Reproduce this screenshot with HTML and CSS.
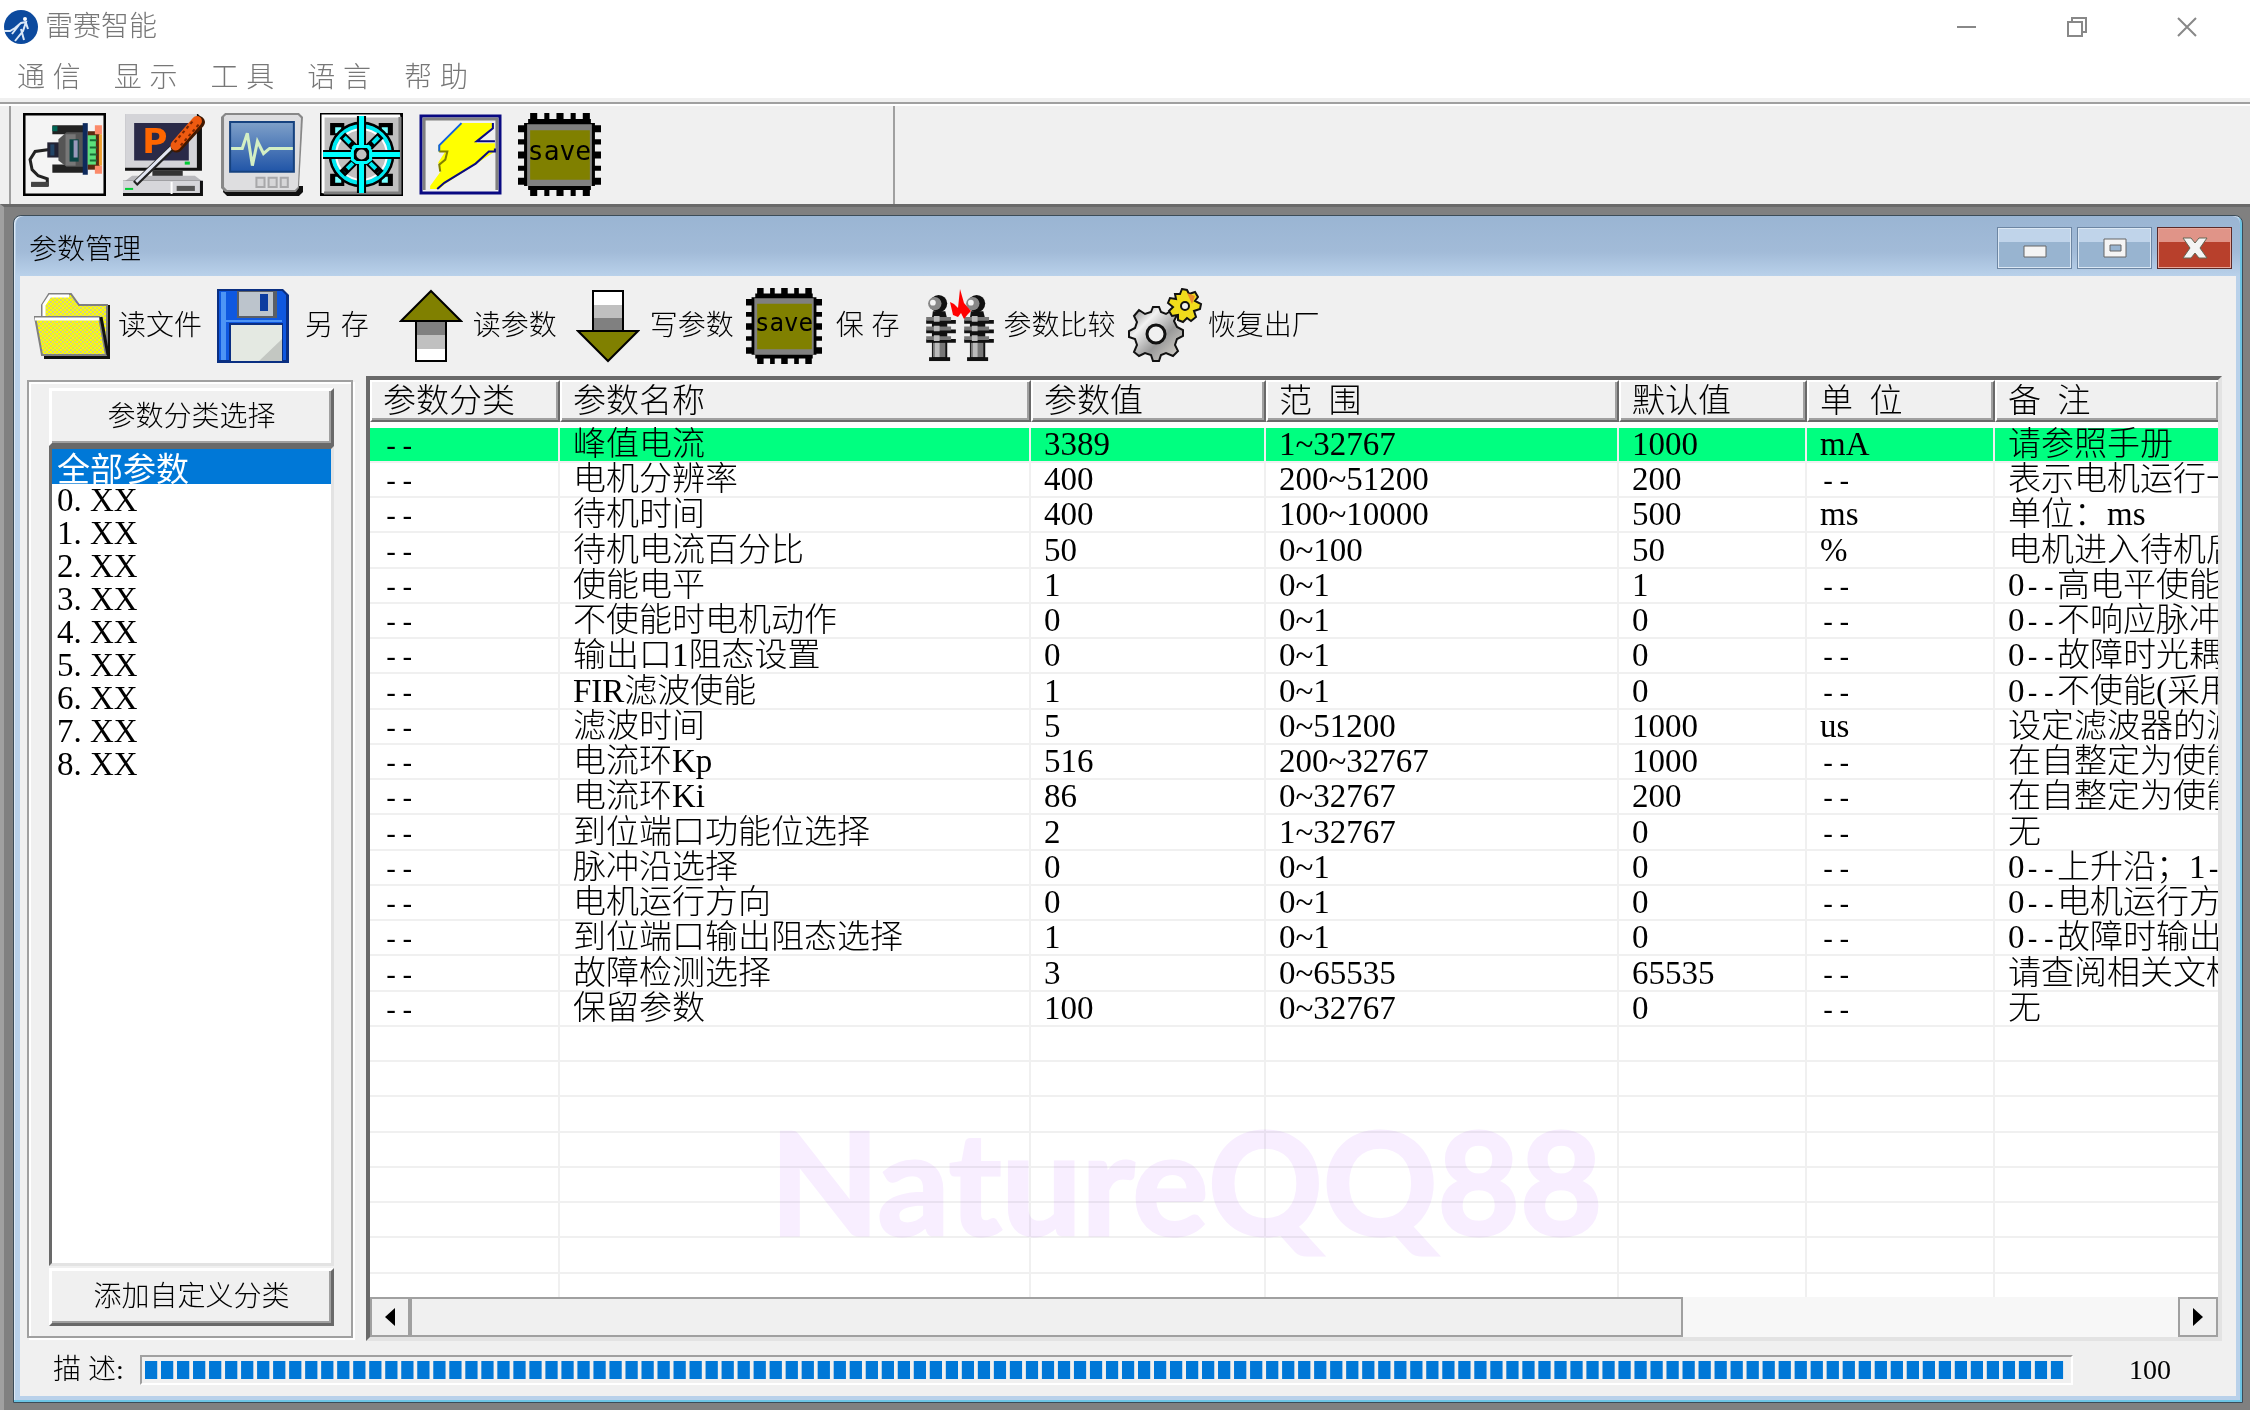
FILE: index.html
```html
<!DOCTYPE html>
<html lang="zh-CN">
<head>
    <meta charset="UTF-8">
    <meta name="viewport" content="width=device-width, initial-scale=1.0">
    <title>雷赛智能</title>
    <link rel="stylesheet" href="styles.css">
</head>
<body>
    <!-- 公用图标 -->
    <svg class="defs" width="0" height="0">
        <defs>
            <symbol id="chip" viewBox="0 0 82 82">
                <path d="M12 0h7v82h-7zM26 0h5v82h-5zM38 0h7v82h-7zM52 0h5v82h-5zM64 0h7v82h-7z" fill="#000"/>
                <path d="M0 12h82v7H0zM0 26h82v5H0zM0 38h82v7H0zM0 52h82v5H0zM0 64h82v7H0z" fill="#000"/>
                <path d="M6 10h4V6h62v4h4v62h-4v4H10v-4H6z" fill="#000"/>
                <path d="M9 11h64v61H9z" fill="#808080"/>
                <path d="M12 17h59v49H12z" fill="#808000"/>
                <text x="41" y="46" text-anchor="middle" class="chip-text">save</text>
            </symbol>
            <symbol id="insulator" viewBox="0 0 32 70">
                <circle cx="13" cy="9" r="9" fill="#111"/>
                <circle cx="9" cy="9" r="7" fill="#888"/>
                <circle cx="7" cy="8" r="3" fill="#f4f4f4"/>
                <path d="M7 17h13l2 8v42H6V24z" fill="#111"/>
                <path d="M0 26h31v4H0zM0 36h31v4H0zM0 46h31v4H0z" fill="#111"/>
                <path d="M0 23h26v4H0zM0 33h26v4H0zM0 43h26v4H0z" fill="#777"/>
                <path d="M8 22h6v6H8zM8 32h6v6H8zM8 42h6v6H8z" fill="#bbb"/>
                <path d="M7 50h13v15H7z" fill="#777"/>
                <path d="M9 50h5v15H9z" fill="#bbb"/>
                <path d="M3 65h22v4H3z" fill="#111"/>
            </symbol>
        </defs>
    </svg>

    <header class="title-bar">
        <svg class="logo" viewBox="0 0 34 34">
            <circle cx="17" cy="17" r="17" fill="#0c4a9e"/>
            <circle cx="21" cy="9" r="2" fill="#fff"/>
            <path d="M0 21h6l5-3 6-5 5-1-3 9-8 10M17 19l3 11M15 15l-7 9M22 13l2 6" fill="none" stroke="#dbe8f7" stroke-width="2"/>
        </svg>
        <h1>雷赛智能</h1>
        <div class="sys-btns">
            <button type="button" aria-label="最小化"><svg viewBox="0 0 20 20"><path d="M0 10h19"/></svg></button>
            <button type="button" aria-label="还原"><svg viewBox="0 0 20 20"><path d="M1 5h14v14H1zM5 5V1h14v14h-4"/></svg></button>
            <button type="button" aria-label="关闭"><svg viewBox="0 0 20 20"><path d="M1 1l18 18M19 1L1 19"/></svg></button>
        </div>
    </header>

    <nav class="menu-bar">
        <button type="button">通 信</button>
        <button type="button">显 示</button>
        <button type="button">工 具</button>
        <button type="button">语 言</button>
        <button type="button">帮 助</button>
    </nav>

    <div class="main-tools">
        <div class="tool-group">
            <button type="button" aria-label="串口">
                <svg viewBox="0 0 82 82">
                    <path d="M1 1h80v80H1z" fill="#f4f4f4" stroke="#000" stroke-width="3"/>
                    <path d="M26 36l-14 2-5 8 2 10 6 6 9 3v6H8" fill="none" stroke="#222" stroke-width="3"/>
                    <path d="M8 68h17v5H8z" fill="#444"/>
                    <path d="M24 29h12v15H24z" fill="#223"/>
                    <path d="M27 31h4v11h-4z" fill="#246"/>
                    <path d="M29 12h32v9H29zM29 51h32v8H29z" fill="#222"/>
                    <path d="M29 13h5v5h-5z" fill="#065"/>
                    <path d="M35 26l8-7h18v34H43l-8-6z" fill="#555"/>
                    <path d="M42 21h10v31H42z" fill="#777"/>
                    <path d="M46 26h9v22h-9z" fill="#0b4444"/>
                    <path d="M50 27h4v17h-4z" fill="#99b"/>
                    <path d="M59 10h5v51h-5z" fill="#0d2a5c"/>
                    <path d="M64 18h12v38H64z" fill="#5a2a10"/>
                    <path d="M64 22h8v29h-8z" fill="#5be07c"/>
                    <path d="M66 26h7v2h-7zM66 33h7v2h-7zM66 40h7v2h-7zM66 46h7v2h-7z" fill="#1a6b35"/>
                    <path d="M71 12h7v9h-7zM71 52h7v8h-7z" fill="#fb8a6a"/>
                    <path d="M75 21h3v31h-3z" fill="#f0a030"/>
                </svg>
            </button>
            <button type="button" aria-label="参数设置">
                <svg viewBox="0 0 82 82">
                    <path d="M3 1h72l4 4v52H3z" fill="#111"/>
                    <path d="M3 1h71v53H3z" fill="#d4d4d8"/>
                    <path d="M12 10h54v37H12z" fill="#2a2a48"/>
                    <text x="20" y="40" class="p-text">P</text>
                    <path d="M62 48h5v3h-5z" fill="#0c3"/>
                    <path d="M30 57h30v6H30z" fill="#333"/>
                    <path d="M10 62h62l8 6H2z" fill="#b9b9bd"/>
                    <path d="M1 67h79v15H1z" fill="#111"/>
                    <path d="M1 67h76v12H1z" fill="#d6d6da"/>
                    <path d="M3 74h8v2H3z" fill="#0c3"/>
                    <path d="M48 68h2v12h-2z" fill="#fff"/>
                    <path d="M54 72h18v5H54z" fill="#555"/>
                    <path d="M50 34L13 70" stroke="#222" stroke-width="6"/>
                    <path d="M50 33L14 68" stroke="#e2e6f2" stroke-width="3"/>
                    <path d="M54 33L76 9" stroke="#401800" stroke-width="12" stroke-linecap="round"/>
                    <path d="M53 32L74 8" stroke="#ee5a10" stroke-width="10" stroke-linecap="round"/>
                    <path d="M52 29L70 8M58 32L77 10" stroke="#7a2500" stroke-width="2" stroke-dasharray="3 3"/>
                </svg>
            </button>
            <button type="button" aria-label="示波器">
                <svg viewBox="0 0 82 82">
                    <defs>
                        <linearGradient id="screen" x1="0" y1="0" x2="0" y2="1">
                            <stop offset="0" stop-color="#7d9fc8"/>
                            <stop offset="1" stop-color="#2256a8"/>
                        </linearGradient>
                    </defs>
                    <path d="M3 72h78v6l-4 4H6l-4-4z" fill="#111"/>
                    <path d="M4 0h73l4 4-4 70-3 4H4l-4-4V4z" fill="#888"/>
                    <path d="M5 2h71l3 3-3 68-3 3H6l-3-3V4z" fill="#dedee0"/>
                    <path d="M8 8h65v51H8z" fill="#16427f"/>
                    <path d="M10 10h61v47H10z" fill="url(#screen)"/>
                    <path d="M10 35h11l5-15 5 32 5-24 6 12 6-5h23" fill="none" stroke="#d3efc4" stroke-width="3"/>
                    <path d="M35 64h8v9h-8zM47 64h8v9h-8zM59 64h7v9h-7z" fill="#d6d6d8" stroke="#a8a8aa" stroke-width="2"/>
                </svg>
            </button>
            <button type="button" aria-label="定位">
                <svg viewBox="0 0 82 82">
                    <path d="M1 1h80v80H1z" fill="#c0c0c0" stroke="#000" stroke-width="3"/>
                    <path d="M3 79V3h76" fill="none" stroke="#fff" stroke-width="3"/>
                    <path d="M79 4v75H4" fill="none" stroke="#808080" stroke-width="3"/>
                    <path d="M10 10h14v12H10zM58 10h14v12H58zM10 60h14v12H10zM58 60h14v12H58z" fill="#000"/>
                    <path d="M15 14h6v6h-6zM61 14h6v6h-6zM15 63h6v6h-6zM61 63h6v6h-6z" fill="#7ff"/>
                    <circle cx="41" cy="41" r="31" fill="none" stroke="#000" stroke-width="3"/>
                    <circle cx="41" cy="41" r="28" fill="#c0c0c0" stroke="#00e8f0" stroke-width="4"/>
                    <circle cx="41" cy="41" r="25" fill="none" stroke="#fff" stroke-width="2"/>
                    <path d="M22 22l38 38M60 22L22 60" stroke="#000" stroke-width="8"/>
                    <path d="M24 24l34 34M58 24L24 58" stroke="#00e8f0" stroke-width="4" stroke-dasharray="8 4"/>
                    <path d="M41 3v76M3 41h76" stroke="#000" stroke-width="9"/>
                    <path d="M41 3v76M3 41h76" stroke="#0ff" stroke-width="5"/>
                    <path d="M35 33h12l3 4v9l-4 3H36l-4-3v-9z" fill="#000" stroke="#0ff" stroke-width="3"/>
                    <circle cx="41" cy="41" r="5" fill="#c0c0c0"/>
                </svg>
            </button>
            <button type="button" aria-label="闪电">
                <svg viewBox="0 0 82 82">
                    <path d="M2 3h78v76H2z" fill="#f0f0f0" stroke="#0a0a82" stroke-width="3"/>
                    <path d="M5 76V6h72v70" fill="none" stroke="#808080" stroke-width="3"/>
                    <path d="M42 10h31v4L57 28v2h18v8L57 50 26 70l-6 5h-9v-3l11-15-3-8 7-11h-7v-6z" fill="#ff0"/>
                    <path d="M42 10L20 32v6" fill="none" stroke="#1060e0" stroke-width="2"/>
                    <path d="M73 10v5L57 28h18M75 35v3h-6L56 50 25 69l-7 6" fill="none" stroke="#0a0a82" stroke-width="2"/>
                    <path d="M20 38h8l-2 8-6 5 1 7" fill="none" stroke="#808000" stroke-width="2"/>
                </svg>
            </button>
            <button type="button" aria-label="保存到芯片"><svg><use href="#chip"/></svg></button>
        </div>
    </div>

    <main class="workspace">
        <section class="child-window">
            <header class="child-title">
                <h2>参数管理</h2>
                <div class="child-btns">
                    <button type="button" aria-label="最小化"><svg viewBox="0 0 26 22"><path d="M2 9h22v11H2z" fill="#f4f4f4" stroke="#666" stroke-width="1"/></svg></button>
                    <button type="button" aria-label="最大化"><svg viewBox="0 0 26 22"><path d="M2 2h22v18H2zM8 8h11v6H8z" fill="#f4f4f4" fill-rule="evenodd" stroke="#666" stroke-width="1"/></svg></button>
                    <button type="button" class="close" aria-label="关闭"><svg viewBox="0 0 26 22"><path d="M1 1h8l4 5 4-5h8l-7 10 7 10h-8l-4-5-4 5H1l7-10z" fill="#f4f4f4" stroke="#665" stroke-width="1"/></svg></button>
                </div>
            </header>

            <div class="child-body">
                <div class="param-tools">
                    <button type="button">
                        <svg class="folder" viewBox="0 0 76 66">
                            <defs>
                                <pattern id="dots" width="4" height="4" patternUnits="userSpaceOnUse">
                                    <path d="M0 0h4v4H0z" fill="#ff0"/>
                                    <path d="M0 0h2v2H0zM2 2h2v2H2z" fill="#d2d27c"/>
                                </pattern>
                            </defs>
                            <path d="M10 63h63V12h3v54H10z" fill="#111"/>
                            <path d="M8 24V12l7-11h22l8 11h28v50" fill="url(#dots)" stroke="#808080" stroke-width="2"/>
                            <path d="M10 24V12l6-9h19" fill="none" stroke="#fff" stroke-width="3"/>
                            <path d="M1 24h64l7 38H8z" fill="url(#dots)" stroke="#808080" stroke-width="2"/>
                            <path d="M1 26h64" stroke="#fff" stroke-width="3"/>
                            <path d="M67 24l7 38" stroke="#111" stroke-width="3"/>
                        </svg>
                        <span>读文件</span>
                    </button>
                    <button type="button">
                        <svg class="floppy" viewBox="0 0 72 74">
                            <path d="M0 0h66l6 6v68H0z" fill="#0a2f82"/>
                            <path d="M2 2h63l4 4v65H2z" fill="#0f58e0"/>
                            <path d="M4 3h5v68H4z" fill="#4d95f5"/>
                            <path d="M20 2h40v27H20z" fill="#5b5f66"/>
                            <path d="M22 3h34v24H22z" fill="#bcc4cc"/>
                            <path d="M43 5h8v17h-8z" fill="#0c3da0"/>
                            <path d="M12 34h54v40H12z" fill="#0a2f82"/>
                            <path d="M14 36h51v36H14z" fill="#e4e9e2"/>
                            <path d="M65 50v22H42z" fill="#c3c7c2"/>
                            <path d="M9 32h56" stroke="#4d95f5" stroke-width="2"/>
                        </svg>
                        <span>另 存</span>
                    </button>
                    <button type="button" class="read">
                        <svg class="arrow" viewBox="0 0 64 74">
                            <path d="M17 32h30v14H17z" fill="#808080"/>
                            <path d="M17 46h30v14H17z" fill="#c0c0c0"/>
                            <path d="M17 60h30v12H17z" fill="#fff"/>
                            <path d="M17 32v40h30V32" fill="none" stroke="#000" stroke-width="2"/>
                            <path d="M32 2l30 30H2z" fill="#808000" stroke="#000" stroke-width="2"/>
                        </svg>
                        <span>读参数</span>
                    </button>
                    <button type="button" class="write">
                        <svg class="arrow" viewBox="0 0 64 74">
                            <path d="M17 2h30v14H17z" fill="#fff"/>
                            <path d="M17 16h30v14H17z" fill="#c0c0c0"/>
                            <path d="M17 29h30v14H17z" fill="#808080"/>
                            <path d="M17 42V2h30v40" fill="none" stroke="#000" stroke-width="2"/>
                            <path d="M2 42h60L32 72z" fill="#808000" stroke="#000" stroke-width="2"/>
                        </svg>
                        <span>写参数</span>
                    </button>
                    <button type="button">
                        <svg class="chip"><use href="#chip"/></svg>
                        <span>保 存</span>
                    </button>
                    <button type="button" class="compare">
                        <svg class="insulators" viewBox="0 0 70 74">
                            <use href="#insulator" x="0" y="6" width="31" height="67"/>
                            <use href="#insulator" x="38" y="6" width="31" height="67"/>
                            <path d="M24 13l4 2 4 4 2-19 4 14 7 8-3 3-4 5-3-6-3 4-5-2z" fill="#f00"/>
                        </svg>
                        <span>参数比较</span>
                    </button>
                    <button type="button" class="reset">
                        <svg class="gears" viewBox="0 0 76 76">
                            <defs>
                                <linearGradient id="steel" x1="0" y1="0" x2="1" y2="1">
                                    <stop offset="0" stop-color="#777"/>
                                    <stop offset=".3" stop-color="#f2f2f2"/>
                                    <stop offset=".6" stop-color="#999"/>
                                    <stop offset="1" stop-color="#e4e0d8"/>
                                </linearGradient>
                            </defs>
                            <path d="M24 24l2-5h6l2 5 5 2 6-4 5 5-3 6 3 6 6 3v6l-6 3-2 6 3 6-5 5-7-3-5 2-2 6h-6l-2-6-6-2-6 3-5-4 3-7-2-6-6-2v-6l6-3 2-6-3-6 5-6 6 4z" fill="url(#steel)" stroke="#111" stroke-width="2"/>
                            <circle cx="29" cy="46" r="9" fill="#f0f0f0" stroke="#111" stroke-width="3"/>
                            <path d="M53 6l2-5 5 1 2 4 6-2 3 5-3 4 6 3-1 5-6 2 2 6-5 4-4-3-4 4-5-2v-5l-6 1-3-5 4-4-5-4 2-5 6 1 -1-5z" fill="#f1dc1c" stroke="#111" stroke-width="2"/>
                            <path d="M60 5l8 3-3 8z" fill="#e98a2a"/>
                            <circle cx="58" cy="18" r="4" fill="#f0f0f0" stroke="#111" stroke-width="2"/>
                        </svg>
                        <span>恢复出厂</span>
                    </button>
                </div>

                <div class="content">
                    <aside class="category">
                        <button type="button" class="bevel">参数分类选择</button>
                        <select size="10" aria-label="参数分类">
                            <option selected>全部参数</option>
                            <option>0. XX</option>
                            <option>1. XX</option>
                            <option>2. XX</option>
                            <option>3. XX</option>
                            <option>4. XX</option>
                            <option>5. XX</option>
                            <option>6. XX</option>
                            <option>7. XX</option>
                            <option>8. XX</option>
                        </select>
                        <button type="button" class="bevel add">添加自定义分类</button>
                    </aside>

                    <div class="grid">
                        <div class="grid-view">
                            <table>
                                <colgroup>
                                    <col class="c-type"><col class="c-name"><col class="c-value"><col class="c-range"><col class="c-def"><col class="c-unit"><col>
                                </colgroup>
                                <thead>
                                    <tr><th>参数分类</th><th>参数名称</th><th>参数值</th><th>范&ensp;围</th><th>默认值</th><th>单&ensp;位</th><th>备&ensp;注</th></tr>
                                </thead>
                                <tbody id="params"></tbody>
                            </table>
                            <div class="watermark">NatureQQ88</div>
                        </div>
                        <div class="scroll-bar">
                            <button type="button" aria-label="向左"><svg viewBox="0 0 10 18"><path d="M10 0v18L0 9z"/></svg></button>
                            <div class="track"><div class="thumb"></div></div>
                            <button type="button" aria-label="向右"><svg viewBox="0 0 10 18"><path d="M0 0v18l10-9z"/></svg></button>
                        </div>
                    </div>
                </div>

                <footer class="status">
                    <label for="progress">描 述:</label>
                    <progress id="progress" value="100" max="100"></progress>
                    <output for="progress">100</output>
                </footer>
            </div>
        </section>
    </main>

    <script>
        // 名称, 参数值, 范围, 默认值, 单位, 备注
        var params = [
            ['峰值电流', '3389', '1~32767', '1000', 'mA', '请参照手册'],
            ['电机分辨率', '400', '200~51200', '200', '--', '表示电机运行一'],
            ['待机时间', '400', '100~10000', '500', 'ms', '单位：ms'],
            ['待机电流百分比', '50', '0~100', '50', '%', '电机进入待机后'],
            ['使能电平', '1', '0~1', '1', '--', '0--高电平使能'],
            ['不使能时电机动作', '0', '0~1', '0', '--', '0--不响应脉冲'],
            ['输出口1阻态设置', '0', '0~1', '0', '--', '0--故障时光耦'],
            ['FIR滤波使能', '1', '0~1', '0', '--', '0--不使能(采用'],
            ['滤波时间', '5', '0~51200', '1000', 'us', '设定滤波器的滤'],
            ['电流环Kp', '516', '200~32767', '1000', '--', '在自整定为使能'],
            ['电流环Ki', '86', '0~32767', '200', '--', '在自整定为使能'],
            ['到位端口功能位选择', '2', '1~32767', '0', '--', '无'],
            ['脉冲沿选择', '0', '0~1', '0', '--', '0--上升沿；1--'],
            ['电机运行方向', '0', '0~1', '0', '--', '0--电机运行方'],
            ['到位端口输出阻态选择', '1', '0~1', '0', '--', '0--故障时输出'],
            ['故障检测选择', '3', '0~65535', '65535', '--', '请查阅相关文档'],
            ['保留参数', '100', '0~32767', '0', '--', '无']
        ];
        var rowCount = 25;
        var tbody = document.getElementById('params');
        for (var i = 0; i < rowCount; i++) {
            var tr = document.createElement('tr');
            if (i == 0) {
                tr.setAttribute('class', 'active');
            }
            // 不足的行用空单元格补齐
            var cells = params[i] ? ['--'].concat(params[i]) : ['', '', '', '', '', '', ''];
            for (var j = 0; j < cells.length; j++) {
                var td = document.createElement('td');
                td.innerHTML = cells[j].replace(/--/g, '<span class="dash">--</span>');
                tr.appendChild(td);
            }
            tbody.appendChild(tr);
        }
    </script>
</body>
</html>
```
FILE: styles.css
```css
*{
    margin: 0;
    padding: 0;
    box-sizing: border-box;
}

body{
    display: flex;
    flex-direction: column;
    height: 100vh;
    overflow: hidden;
    font-family: "Liberation Sans", "Noto Sans CJK SC", sans-serif;
    font-size: 28px;
    font-weight: 300;
    line-height: 32px;
    color: #000;
    background-color: #f0f0f0;
}
button{
    font: inherit;
    color: inherit;
    border: none;
    background: none;
    white-space: nowrap;
}
svg{
    display: block;
}
.defs{
    position: absolute;
}
h1,h2{
    font-size: 28px;
    font-weight: 300;
}
.chip-text{
    font-family: "DejaVu Sans Mono", monospace;
    font-size: 26px;
    font-weight: 400;
}
.p-text{
    font-family: "DejaVu Sans", sans-serif;
    font-size: 34px;
    font-weight: bold;
    fill: #f60;
}

/* 主窗口标题栏 */
.title-bar{
    display: flex;
    align-items: center;
    height: 54px;
    padding-left: 4px;
    color: #777;
    background-color: #fff;
}
.logo{
    width: 34px;
    height: 34px;
    margin-right: 7px;
}
.sys-btns{
    display: flex;
    gap: 90px;
    margin-left: auto;
    padding-right: 53px;
}
.sys-btns svg{
    width: 20px;
    height: 20px;
    fill: none;
    stroke: #888;
    stroke-width: 2;
}

.menu-bar{
    display: flex;
    gap: 33px;
    height: 48px;
    padding: 7px 0 0 17px;
    color: #777;
    background-color: #fff;
    border-bottom: 4px solid #f0f0f0;
}
.menu-bar button{
    height: 34px;
}

/* 主工具栏 */
.main-tools{
    display: flex;
    height: 102px;
    padding-left: 9px;
    border-top: 2px solid #a0a0a0;
    box-shadow: inset 0 2px #fff;
}
.tool-group{
    display: flex;
    align-items: center;
    gap: 16px;
    width: 886px;
    margin-top: 2px;
    padding: 0 0 2px 12px;
    border-left: 2px solid #a0a0a0;
    border-right: 2px solid #a0a0a0;
}
.tool-group svg{
    width: 83px;
    height: 83px;
}

.workspace{
    display: flex;
    flex: 1;
    min-height: 0;
    padding: 8px 7px 7px 9px;
    background-color: #808080;
    border-top: 3px solid #696969;
    border-left: 4px solid #a0a0a0;
}

/* 参数管理子窗口 */
.child-window{
    display: flex;
    flex-direction: column;
    flex: 1;
    min-width: 0;
    padding: 0 6px 6px;
    background-color: #b9d1ea;
    border: 1px solid #3c4c58;
    border-radius: 8px 8px 0 0;
    box-shadow: inset -2px -2px #6cc4e4, inset 1px 1px #dce8f4;
}
.child-title{
    display: flex;
    height: 60px;
    margin: 0 -4px;
    padding: 11px 8px 0 13px;
    background-image: linear-gradient(#9ab5d3, #a2bbd8 60%, #b9d1ea);
    border-radius: 8px 8px 0 0;
}
.child-title h2{
    line-height: 46px;
}
.child-btns{
    display: flex;
    gap: 5px;
    margin-left: auto;
}
.child-btns button{
    display: flex;
    align-items: center;
    justify-content: center;
    width: 75px;
    height: 42px;
    background-image: linear-gradient(#c0d4ea 36%, #98b4d0 36%);
    border: 1px solid #6d86a3;
    box-shadow: inset 0 0 0 1px #dce8f4;
}
.child-btns .close{
    background-image: linear-gradient(#e09488 36%, #b8402c 36%);
    border-color: #5c2a28;
    box-shadow: inset 0 0 0 1px #e8a89c;
}
.child-btns svg{
    width: 26px;
    height: 22px;
}
.child-body{
    display: flex;
    flex-direction: column;
    flex: 1;
    min-height: 0;
    background-color: #f0f0f0;
}

/* 子窗口工具栏 */
.param-tools{
    display: flex;
    align-items: center;
    gap: 15px;
    height: 100px;
    padding-left: 14px;
}
.param-tools button{
    display: flex;
    align-items: center;
    gap: 8px;
}
.param-tools .read{
    margin-left: 15px;
}
.param-tools .read,
.param-tools .write{
    gap: 10px;
}
.param-tools .write{
    margin-left: 4px;
    margin-right: -3px;
}
.param-tools .compare{
    margin-left: 11px;
}
.param-tools .reset{
    gap: 5px;
    margin-left: -4px;
}
.param-tools .folder{
    width: 76px;
    height: 66px;
}
.param-tools .floppy{
    width: 72px;
    height: 74px;
    margin-right: 8px;
}
.param-tools .arrow{
    width: 64px;
    height: 74px;
}
.param-tools .chip{
    width: 76px;
    height: 76px;
    margin-right: 6px;
}
.param-tools .insulators{
    width: 70px;
    height: 74px;
}
.param-tools .gears{
    width: 76px;
    height: 76px;
}

.content{
    display: flex;
    gap: 13px;
    flex: 1;
    min-height: 0;
    padding: 0 14px 0 7px;
}

/* 左侧分类 */
.category{
    display: flex;
    flex-direction: column;
    width: 326px;
    margin: 4px 0 3px;
    padding: 6px 17px 10px 20px;
    border: 2px solid #a0a0a0;
    box-shadow: inset 2px 2px #fff, 2px 2px #fff;
}
.bevel{
    height: 58px;
    border: 3px solid;
    border-color: #fff #696969 #696969 #fff;
    box-shadow: inset -2px -2px #a0a0a0;
}
.category select{
    flex: 1;
    width: 100%;
    font-family: "Liberation Serif", "Noto Sans CJK SC", serif;
    font-size: 33px;
    font-weight: 300;
    color: #000;
    background-color: #fff;
    border: 3px solid;
    border-color: #696969 #e3e3e3 #e3e3e3 #696969;
    border-radius: 0;
    outline: none;
    overflow: hidden;
}
.category option{
    display: flex;
    align-items: center;
    height: 33px;
    min-height: 33px;
    padding: 0 5px;
}
.category option:first-child{
    height: 35px;
}
.category option:checked{
    background-image: linear-gradient(#0078d7, #0078d7);
    -webkit-text-fill-color: #fff;
}
.category .add{
    margin-top: 2px;
}

/* 参数表格 */
.grid{
    display: flex;
    flex-direction: column;
    flex: 1;
    min-width: 0;
    border: 4px solid;
    border-color: #696969 #e3e3e3 #e3e3e3 #696969;
    background-color: #fff;
}
.grid-view{
    position: relative;
    flex: 1;
    min-height: 0;
    overflow: hidden;
}
.grid table{
    width: 100%;
    table-layout: fixed;
    border-collapse: separate;
    border-spacing: 0;
    font-family: "Liberation Serif", "Noto Sans CJK SC", serif;
    font-size: 33px;
    line-height: 33px;
}
.c-type,.c-def,.c-unit{
    width: 188px;
}
.c-type{
    width: 190px;
}
.c-name{
    width: 471px;
}
.c-value{
    width: 235px;
}
.c-range{
    width: 353px;
}
.grid th{
    height: 42px;
    padding-left: 11px;
    font-weight: 300;
    text-align: left;
    background-color: #f0f0f0;
    border: 2px solid;
    border-color: #fff #696969 #696969 #fff;
    box-shadow: inset -2px -2px #a0a0a0;
}
.grid thead::after{
    content: "";
    display: block;
    height: 6px;
}
.grid td{
    height: 35px;
    padding-left: 13px;
    white-space: nowrap;
    border-right: 2px solid #f0f0f0;
    border-bottom: 2px solid #f0f0f0;
}
.grid tr:nth-child(4n) td{
    height: 36px;
}
.grid th:last-child,.grid td:last-child{
    border-right: none;
}
.grid .active td{
    background-color: #00ff80;
}
.dash{
    font-family: "Liberation Mono", monospace;
    font-size: 27px;
    line-height: 1px;
}
.watermark{
    position: absolute;
    left: 400px;
    bottom: 37px;
    font-family: Lato, sans-serif;
    font-size: 142px;
    font-weight: bold;
    line-height: 160px;
    color: #f8eeff;
    -webkit-text-stroke: 3px #f8eeff;
    mix-blend-mode: multiply;
    pointer-events: none;
}

.scroll-bar{
    display: flex;
    height: 40px;
    background-color: #f7f7f7;
}
.scroll-bar button{
    display: flex;
    align-items: center;
    justify-content: center;
    width: 40px;
    background-color: #f0f0f0;
    border: 2px solid #a0a0a0;
}
.scroll-bar svg{
    width: 10px;
    height: 18px;
}
.track{
    flex: 1;
}
.thumb{
    width: 72%;
    height: 100%;
    background-color: #f0f0f0;
    border: 2px solid #a0a0a0;
}

/* 底部状态 */
.status{
    display: flex;
    align-items: center;
    height: 55px;
    padding-left: 33px;
    padding-top: 2px;
    font-family: "Liberation Serif", "Noto Sans CJK SC", serif;
}
.status label{
    width: 87px;
}
.status progress{
    flex: 1;
    height: 30px;
    padding: 4px 3px;
    appearance: none;
    border: 2px solid;
    border-color: #a0a0a0 #fff #fff #a0a0a0;
    background-color: #f0f0f0;
}
.status progress::-webkit-progress-bar{
    background-color: #f0f0f0;
}
.status progress::-webkit-progress-value{
    background:
        linear-gradient(#f0f0f0, #f0f0f0) right / 4px 100% no-repeat,
        linear-gradient(90deg, #0078d7 12px, #f0f0f0 12px) 0 0 / 16px 100% space;
}
.status output{
    width: 163px;
    padding-right: 9px;
    text-align: center;
}
```
